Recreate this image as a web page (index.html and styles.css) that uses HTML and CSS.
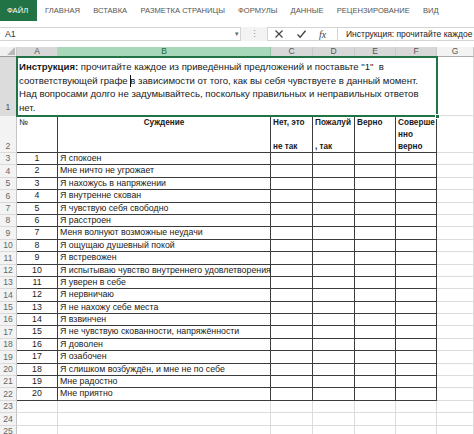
FILE: index.html
```html
<!DOCTYPE html>
<html lang="ru">
<head>
<meta charset="utf-8">
<link rel="stylesheet" href="styles.css">
</head>
<body>
<div class="app">
  <div class="tabs">
    <span class="tab file">ФАЙЛ</span>
    <span class="tab">ГЛАВНАЯ</span>
    <span class="tab">ВСТАВКА</span>
    <span class="tab">РАЗМЕТКА СТРАНИЦЫ</span>
    <span class="tab">ФОРМУЛЫ</span>
    <span class="tab">ДАННЫЕ</span>
    <span class="tab">РЕЦЕНЗИРОВАНИЕ</span>
    <span class="tab">ВИД</span>
  </div>
  <div class="fbar">
    <div class="namebox"><span>A1</span><span class="dd">▾</span></div>
    <div class="grip">⋮</div>
    <div class="icons">
      <svg width="10" height="10" viewBox="0 0 10 10"><path d="M1.5 1.5 L8.5 8.5 M8.5 1.5 L1.5 8.5" stroke="#444" stroke-width="1.2" fill="none"/></svg>
      <svg width="11" height="10" viewBox="0 0 11 10"><path d="M1.5 5.5 L4.2 8.2 L9.5 1.8" stroke="#444" stroke-width="1.4" fill="none"/></svg>
      <span class="fx">fx</span>
    </div>
    <div class="finput">Инструкция: прочитайте каждое</div>
  </div>
  <div class="sheet">
    <div class="corner"><svg width="8" height="8" viewBox="0 0 8 8"><path d="M8 0 L8 8 L0 8 Z" fill="#b9b9b9"/></svg></div>
    <div class="ch sel">A</div>
    <div class="ch green">B</div>
    <div class="ch sel">C</div>
    <div class="ch sel">D</div>
    <div class="ch sel">E</div>
    <div class="ch sel">F</div>
    <div class="ch">G</div>

    <div class="rh rsel">1</div>
    <div class="merged">
      <b>Инструкция:</b> прочитайте каждое из приведённый предложений и поставьте "1"&nbsp; в<br>
      соответствующей графе в зависимости от того, как вы себя чувствуете в данный момент.<br>
      Над вопросами долго не задумывайтесь, поскольку правильных и неправильных ответов<br>
      нет.
      <span class="ibeam"></span>
      <span class="handle"></span>
    </div>
    <div class="c"></div>

    <div class="rh">2</div>
    <div class="t hd">№</div>
    <div class="t hd b center">Суждение</div>
    <div class="t hd b">Нет, это<br>&nbsp;<br>не так</div>
    <div class="t hd b">Пожалуй<br>&nbsp;<br>, так</div>
    <div class="t hd b">Верно</div>
    <div class="t hd b">Соверше<br>нно<br>верно</div>
    <div class="c"></div>

    <div class="rh">3</div><div class="t n">1</div><div class="t s">Я спокоен</div><div class="t"></div><div class="t"></div><div class="t"></div><div class="t"></div><div class="c"></div>
    <div class="rh">4</div><div class="t n">2</div><div class="t s">Мне ничто не угрожает</div><div class="t"></div><div class="t"></div><div class="t"></div><div class="t"></div><div class="c"></div>
    <div class="rh">5</div><div class="t n">3</div><div class="t s">Я нахожусь в напряжении</div><div class="t"></div><div class="t"></div><div class="t"></div><div class="t"></div><div class="c"></div>
    <div class="rh">6</div><div class="t n">4</div><div class="t s">Я внутренне скован</div><div class="t"></div><div class="t"></div><div class="t"></div><div class="t"></div><div class="c"></div>
    <div class="rh">7</div><div class="t n">5</div><div class="t s">Я чувствую себя свободно</div><div class="t"></div><div class="t"></div><div class="t"></div><div class="t"></div><div class="c"></div>
    <div class="rh">8</div><div class="t n">6</div><div class="t s">Я расстроен</div><div class="t"></div><div class="t"></div><div class="t"></div><div class="t"></div><div class="c"></div>
    <div class="rh">9</div><div class="t n">7</div><div class="t s">Меня волнуют возможные неудачи</div><div class="t"></div><div class="t"></div><div class="t"></div><div class="t"></div><div class="c"></div>
    <div class="rh">10</div><div class="t n">8</div><div class="t s">Я ощущаю душевный покой</div><div class="t"></div><div class="t"></div><div class="t"></div><div class="t"></div><div class="c"></div>
    <div class="rh">11</div><div class="t n">9</div><div class="t s">Я встревожен</div><div class="t"></div><div class="t"></div><div class="t"></div><div class="t"></div><div class="c"></div>
    <div class="rh">12</div><div class="t n">10</div><div class="t s">Я испытываю чувство внутреннего удовлетворения</div><div class="t"></div><div class="t"></div><div class="t"></div><div class="t"></div><div class="c"></div>
    <div class="rh">13</div><div class="t n">11</div><div class="t s">Я уверен в себе</div><div class="t"></div><div class="t"></div><div class="t"></div><div class="t"></div><div class="c"></div>
    <div class="rh">14</div><div class="t n">12</div><div class="t s">Я нервничаю</div><div class="t"></div><div class="t"></div><div class="t"></div><div class="t"></div><div class="c"></div>
    <div class="rh">15</div><div class="t n">13</div><div class="t s">Я не нахожу себе места</div><div class="t"></div><div class="t"></div><div class="t"></div><div class="t"></div><div class="c"></div>
    <div class="rh">16</div><div class="t n">14</div><div class="t s">Я взвинчен</div><div class="t"></div><div class="t"></div><div class="t"></div><div class="t"></div><div class="c"></div>
    <div class="rh">17</div><div class="t n">15</div><div class="t s">Я не чувствую скованности, напряжённости</div><div class="t"></div><div class="t"></div><div class="t"></div><div class="t"></div><div class="c"></div>
    <div class="rh">18</div><div class="t n">16</div><div class="t s">Я доволен</div><div class="t"></div><div class="t"></div><div class="t"></div><div class="t"></div><div class="c"></div>
    <div class="rh">19</div><div class="t n">17</div><div class="t s">Я озабочен</div><div class="t"></div><div class="t"></div><div class="t"></div><div class="t"></div><div class="c"></div>
    <div class="rh">20</div><div class="t n">18</div><div class="t s">Я слишком возбуждён, и мне не по себе</div><div class="t"></div><div class="t"></div><div class="t"></div><div class="t"></div><div class="c"></div>
    <div class="rh">21</div><div class="t n">19</div><div class="t s">Мне радостно</div><div class="t"></div><div class="t"></div><div class="t"></div><div class="t"></div><div class="c"></div>
    <div class="rh">22</div><div class="t n">20</div><div class="t s">Мне приятно</div><div class="t"></div><div class="t"></div><div class="t"></div><div class="t"></div><div class="c"></div>

    <div class="rh">23</div><div class="c"></div><div class="c"></div><div class="c"></div><div class="c"></div><div class="c"></div><div class="c"></div><div class="c"></div>
    <div class="rh">24</div><div class="c"></div><div class="c"></div><div class="c"></div><div class="c"></div><div class="c"></div><div class="c"></div><div class="c"></div>
    <div class="rh">25</div><div class="c"></div><div class="c"></div><div class="c"></div><div class="c"></div><div class="c"></div><div class="c"></div><div class="c"></div>
  </div>
</div>
</body>
</html>
```

FILE: styles.css
```css
* { box-sizing: border-box; }
html, body { margin: 0; padding: 0; background: #ffffff; }
body {
  font-family: "Liberation Sans", Arial, sans-serif;
  color: #222;
  width: 474px;
  height: 434px;
  overflow: hidden;
}
.app { display: flex; flex-direction: column; }

.tabs {
  height: 21px;
  display: flex;
  align-items: stretch;
  background: #fff;
}
.tab {
  display: flex;
  align-items: center;
  padding: 0 6.6px;
  font-size: 7.6px;
  color: #555;
  white-space: nowrap;
}
.tab.file {
  background: #217346;
  color: #fff;
  padding: 0 7px;
  width: 37px;
  margin-right: 1.5px;
}

.fbar {
  margin-top: 6px;
  height: 14px;
  display: flex;
  background: #f3f3f3;
}
.namebox {
  width: 241px;
  display: flex;
  align-items: center;
  justify-content: space-between;
  background: #fff;
  border-top: 1px solid #d4d4d4;
  border-bottom: 1px solid #d4d4d4;
  border-right: 1px solid #d4d4d4;
  padding: 0 1px 0 5px;
  font-size: 8.8px;
  color: #333;
}
.namebox .dd { font-size: 7px; color: #666; }
.grip {
  width: 26px;
  display: flex;
  align-items: center;
  justify-content: center;
  font-size: 9px;
  color: #888;
}
.icons {
  width: 71px;
  display: flex;
  align-items: center;
  gap: 12px;
  padding-left: 6px;
  background: #fff;
  border: 1px solid #d4d4d4;
}
.icons .fx {
  font-family: "Liberation Serif", serif;
  font-style: italic;
  font-size: 10px;
  color: #444;
}
.finput {
  flex: 1;
  background: #fff;
  border-top: 1px solid #d4d4d4;
  border-bottom: 1px solid #d4d4d4;
  padding-left: 8px;
  font-size: 8.5px;
  line-height: 12px;
  color: #222;
  white-space: nowrap;
  overflow: hidden;
}

.sheet {
  margin-top: 6px;
  display: grid;
  grid-template-columns: 17px 41px 213px 42px 42px 41px 41px 1fr;
  grid-template-rows: 10px 59px 37px repeat(23, 12.4px);
  font-size: 8.8px;
}
.corner {
  background: #f0f0f0;
  border-right: 1px solid #c9c9c9;
  border-bottom: 1px solid #9b9b9b;
  display: flex;
  align-items: flex-end;
  justify-content: flex-end;
  padding: 0 1px 1px 0;
}
.ch {
  background: #f3f3f3;
  border-right: 1px solid #c9c9c9;
  border-bottom: 1px solid #ababab;
  text-align: center;
  font-size: 8.5px;
  line-height: 9px;
  color: #555;
}
.ch.sel { background: #d8d8d8; border-bottom-color: #8c8c8c; }
.ch.green { background: #a6d8b9; color: #1e6b41; border-right-color: #8fc7a5; border-bottom-color: #217346; }

.rh {
  background: #f3f3f3;
  border-right: 1px solid #c4c4c4;
  border-bottom: 1px solid #dadada;
  display: flex;
  align-items: flex-end;
  justify-content: center;
  font-size: 8.6px;
  line-height: 11px;
  color: #666;
}
.rh.rsel { background: #dcdcdc; color: #555; padding-bottom: 2px; }

.c {
  border-right: 1px solid #dcdcdc;
  border-bottom: 1px solid #dcdcdc;
}
.t {
  border-right: 1px solid #3c3c3c;
  border-bottom: 1px solid #3c3c3c;
  line-height: 11.4px;
  white-space: nowrap;
  color: #1a1a1a;
  padding: 0 2px;
  display: flex;
  align-items: flex-end;
}
.t.n { justify-content: center; }
.t.s { overflow: visible; }
.t.hd {
  display: block;
  padding-top: 1px;
  line-height: 12px;
  font-size: 8.2px;
}
.t.b { font-weight: bold; }
.t.center { text-align: center; }

.merged {
  grid-column: 2 / span 6;
  position: relative;
  padding: 3px 2px 0 2px;
  font-size: 9.6px;
  line-height: 13.6px;
  white-space: nowrap;
  color: #1a1a1a;
  outline: 2px solid #217346;
  outline-offset: -1px;
  z-index: 1;
}
.merged b { font-weight: bold; }
.ibeam {
  position: absolute;
  left: 113px;
  top: 18px;
  width: 1px;
  height: 12px;
  background: #111;
}
.handle {
  position: absolute;
  right: -3px;
  bottom: -3px;
  width: 5px;
  height: 5px;
  background: #217346;
  border: 1px solid #fff;
}
```
